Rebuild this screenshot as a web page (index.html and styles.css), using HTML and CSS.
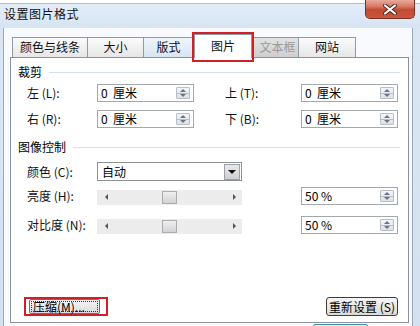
FILE: index.html
```html
<!DOCTYPE html>
<html>
<head>
<meta charset="utf-8">
<link rel="stylesheet" href="styles.css">
</head>
<body>
<div class="win">
  <div class="titlebar">
    <span class="title">设置图片格式</span>
    <span class="close">
      <svg width="14" height="11" viewBox="0 0 14 11">
        <path d="M2 1.5 L12 9.5 M12 1.5 L2 9.5" stroke="#5a2418" stroke-width="4" stroke-linecap="round"/>
        <path d="M2 1.5 L12 9.5 M12 1.5 L2 9.5" stroke="#ffffff" stroke-width="2.2" stroke-linecap="round"/>
      </svg>
    </span>
  </div>
  <div class="client">
    <div class="tabs">
      <div class="tab w75">颜色与线条</div>
      <div class="tab w56">大小</div>
      <div class="tab w50 hover">版式</div>
      <div class="tab sel">图片</div>
      <div class="tab w45 dis">文本框</div>
      <div class="tab w58">网站</div>
    </div>
    <div class="panel">
      <div class="group-h"><span>裁剪</span><i class="rule"></i></div>
      <div class="crop-grid">
        <span class="lbl">左 (L):</span>
        <span class="field"><span class="val">0&nbsp; 厘米</span><span class="spin"></span></span>
        <span></span>
        <span class="lbl">上 (T):</span>
        <span class="field"><span class="val">0&nbsp; 厘米</span><span class="spin"></span></span>

        <span class="lbl">右 (R):</span>
        <span class="field"><span class="val">0&nbsp; 厘米</span><span class="spin"></span></span>
        <span></span>
        <span class="lbl">下 (B):</span>
        <span class="field"><span class="val">0&nbsp; 厘米</span><span class="spin"></span></span>
      </div>

      <div class="group-h g2"><span>图像控制</span><i class="rule"></i></div>
      <div class="img-grid">
        <span class="lbl">颜色 (C):</span>
        <span class="select"><span class="val">自动</span><span class="drop"></span></span>
        <span></span>
        <span></span>
      </div>
      <div class="img-grid rowA">
        <span class="lbl">亮度 (H):</span>
        <span class="slider"><span class="arr l"></span><span class="thumb"></span><span class="arr r"></span></span>
        <span></span>
        <span class="field"><span class="val">50 %</span><span class="spin"></span></span>
      </div>
      <div class="img-grid rowB">
        <span class="lbl">对比度 (N):</span>
        <span class="slider"><span class="arr l"></span><span class="thumb"></span><span class="arr r"></span></span>
        <span></span>
        <span class="field"><span class="val">50 %</span><span class="spin"></span></span>
      </div>

      <div class="btnrow">
        <span class="mark"><span class="btn compress"><span class="focus">压缩(M)...</span></span></span>
        <span class="btn reset">重新设置 (S)</span>
      </div>
    </div>
    <div class="footer"><span class="okbtn">确定</span></div>
  </div>
</div>
</body>
</html>
```

FILE: styles.css
```css
* { box-sizing: border-box; }
html, body { margin: 0; padding: 0; }
body {
  width: 420px;
  height: 326px;
  overflow: hidden;
  background: #ffffff;
  font-family: "Noto Sans CJK SC", "Liberation Sans", sans-serif;
  font-size: 12px;
  color: #000;
}
.win {
  width: 420px;
  height: 326px;
  display: flex;
  flex-direction: column;
  background: linear-gradient(#dae6f3, #d3e1f0);
}
.titlebar {
  height: 28px;
  flex: none;
  display: flex;
  align-items: flex-start;
  background: linear-gradient(to bottom, #ffffff 0, #ffffff 3px, #b4bfcc 3px, #b4bfcc 4px, #e3edf8 4px, #d6e4f3 100%);
}
.title {
  margin-left: 4px;
  margin-top: 7px;
  line-height: 14px;
  font-size: 12px;
  letter-spacing: 0.5px;
  color: #111;
}
.close {
  margin-left: auto;
  margin-right: 5px;
  width: 50px;
  height: 19px;
  display: flex;
  align-items: center;
  justify-content: center;
  border: 1px solid #7b3226;
  border-top: none;
  border-radius: 0 0 5px 5px;
  background: linear-gradient(#e9a99a 0%, #d87a66 35%, #c24a33 55%, #c9573d 100%);
}
.client {
  flex: 1;
  margin: 0 7px 0 3px;
  border-left: 1px solid #9aa7b7;
  border-right: 1px solid #9aa7b7;
  background: #f8fafd;
  display: flex;
  flex-direction: column;
}
.tabs {
  height: 29px;
  flex: none;
  display: flex;
  align-items: flex-end;
  padding-left: 8px;
}
.tab {
  height: 20px;
  line-height: 18px;
  text-align: center;
  border: 1px solid #8f9aa7;
  border-bottom: none;
  margin-right: -1px;
  background: linear-gradient(#fbfbfb, #e6e6e6);
  color: #111;
  white-space: nowrap;
}
.w75 { width: 76px; }
.w56 { width: 57px; }
.w50 { width: 51px; }
.w45 { width: 46px; }
.w58 { width: 58px; }
.tab.hover { background: linear-gradient(#eef5fc, #d7e6f5); }
.tab.dis { color: #9a9a9a; background: linear-gradient(#e2e2e2, #cfcfcf); padding-left: 3px; }
.tab.sel {
  width: 58px;
  height: 24px;
  margin: 0 1px -1px 1px;
  line-height: 22px;
  background: #ffffff;
  position: relative;
  z-index: 1;
}
.tab.sel::after {
  content: "";
  position: absolute;
  top: -3px;
  left: -3px;
  right: -3px;
  bottom: -4px;
  border: 2px solid #cf1f28;
}
.panel {
  height: 266px;
  flex: none;
  width: 399px;
  margin-left: 6px;
  border: 1px solid #8a929d;
  background: #ffffff;
  display: flex;
  flex-direction: column;
  padding: 7px 8px 6px 7px;
}
.group-h {
  height: 14px;
  display: flex;
  align-items: center;
  line-height: 14px;
}
.group-h .rule {
  flex: 1;
  height: 1px;
  margin-left: 7px;
  background: #d7dfe6;
}
.g2 { margin-top: 12px; }
.crop-grid {
  margin-top: 5px;
  margin-left: 9px;
  display: grid;
  grid-template-columns: 70px 97px 31px 76px 97px;
  grid-auto-rows: 18px;
  row-gap: 8px;
}
.lbl {
  line-height: 18px;
  color: #111;
  white-space: nowrap;
}
.field {
  height: 18px;
  border: 1px solid #a3a8ae;
  background: #fff;
  display: flex;
  align-items: center;
  padding-left: 3px;
  padding-right: 3px;
}
.field .val { flex: 1; line-height: 16px; white-space: nowrap; }
.spin {
  width: 14px;
  height: 12px;
  border: 1px solid #b7bec8;
  border-radius: 1px;
  background:
    linear-gradient(to bottom, transparent 5px, #b7bec8 5px, #b7bec8 6px, transparent 6px),
    linear-gradient(#f3f5f8, #dde2e8);
  position: relative;
}
.spin::before, .spin::after {
  content: "";
  position: absolute;
  left: 3px;
  width: 0;
  height: 0;
  border-left: 3px solid transparent;
  border-right: 3px solid transparent;
}
.spin::before { top: 1px; border-bottom: 3px solid #6b7480; }
.spin::after { bottom: 1px; border-top: 3px solid #6b7480; }
.img-grid {
  margin-left: 9px;
  display: grid;
  grid-template-columns: 70px 145px 59px 97px;
  grid-auto-rows: 18px;
  align-items: center;
}
.group-h.g2 + .img-grid { margin-top: 8px; grid-auto-rows: 19px; }
.rowA { margin-top: 6px; }
.rowB { margin-top: 11px; }
.select {
  height: 19px;
  border: 1px solid #8c9198;
  background: #fff;
  display: flex;
  align-items: center;
  padding-left: 4px;
  padding-right: 1px;
}
.select .val { flex: 1; line-height: 17px; }
.drop {
  width: 16px;
  height: 16px;
  border: 1px solid #9aa0a8;
  background: linear-gradient(#e9e9e9, #cfcfcf);
  display: flex;
  align-items: center;
  justify-content: center;
}
.drop::before {
  content: "";
  width: 0;
  height: 0;
  border-left: 4px solid transparent;
  border-right: 4px solid transparent;
  border-top: 4px solid #111;
}
.slider {
  height: 15px;
  background: #ececec;
  display: flex;
  align-items: center;
  padding: 0 6px 0 8px;
  position: relative;
  margin-top: 2px;
}
.arr { width: 0; height: 0; border-top: 3px solid transparent; border-bottom: 3px solid transparent; }
.arr.l { border-right: 3px solid #555; }
.arr.r { border-left: 3px solid #555; margin-left: auto; }
.thumb {
  position: absolute;
  left: 65px;
  top: 1px;
  width: 15px;
  height: 13px;
  border: 1px solid #a9adb2;
  background: linear-gradient(#efefef, #d3d3d3);
}
.btnrow {
  margin-top: auto;
  height: 19px;
  display: flex;
  align-items: center;
  justify-content: space-between;
  padding-left: 6px;
  padding-right: 2px;
}
.mark {
  height: 19px;
  width: 84px;
  border: 2px solid #cf1f28;
  padding: 0 6px 0 3px;
  display: flex;
  align-items: center;
}
.btn {
  height: 15px;
  border: 1px solid #6f6f6f;
  border-radius: 2px;
  background: linear-gradient(#f6f6f6, #dadada);
  display: flex;
  align-items: center;
  justify-content: center;
  line-height: 13px;
  white-space: nowrap;
}
.compress { width: 71px; padding: 1px; }
.focus {
  flex: 1;
  height: 11px;
  border: 1px dotted #333;
  line-height: 10px;
  padding-left: 1px;
  font-size: 12px;
}
.reset {
  width: 72px;
  height: 19px;
  border-color: #3c3c3c;
  border-radius: 3px;
  line-height: 17px;
}
.footer {
  flex: 1;
  overflow: hidden;
  position: relative;
}
.okbtn {
  display: block;
  margin-left: 309px;
  margin-top: 1px;
  width: 55px;
  height: 20px;
  border: 1px solid #3f8fa8;
  border-radius: 2px;
  background: linear-gradient(#eaf6f9, #cfe7ee);
  text-align: center;
  line-height: 14px;
  font-size: 12px;
}
```
